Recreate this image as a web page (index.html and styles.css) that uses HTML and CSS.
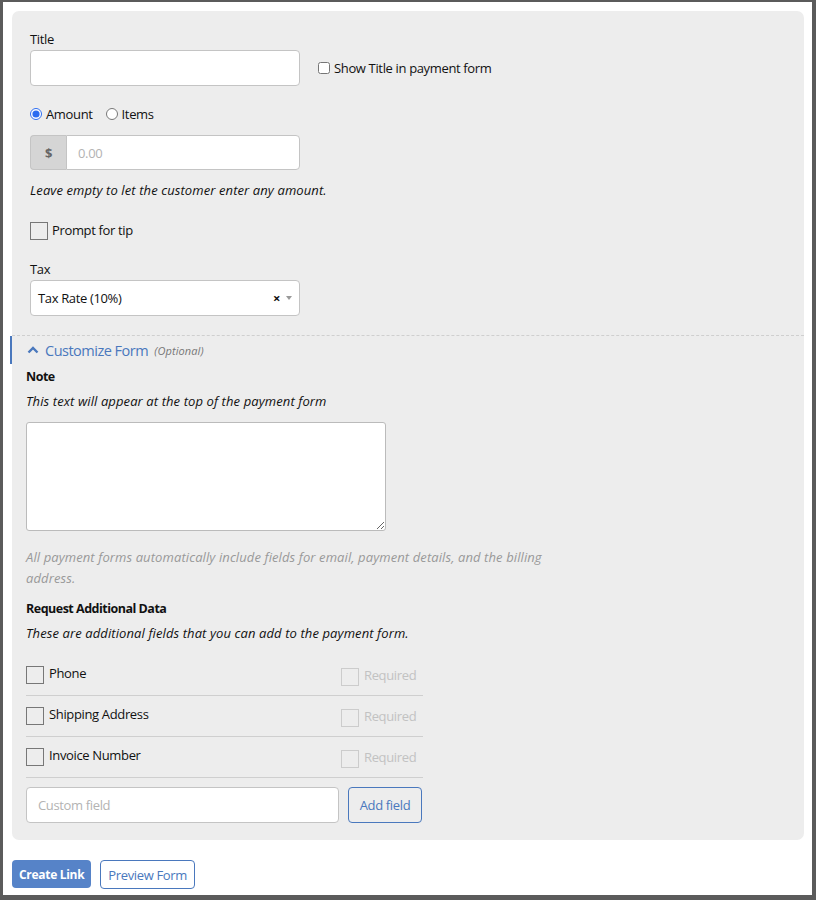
FILE: index.html
```html
<!DOCTYPE html>
<html lang="en">
<head>
    <meta charset="UTF-8">
    <title>Payment Link</title>
    <link rel="stylesheet" href="styles.css">
</head>
<body>
<div class="frame">
    <form class="panel">

        <div class="top">
            <label class="lbl">Title</label>
            <div class="row">
                <input type="text" class="field w270">
                <label class="inline"><input type="checkbox" class="small"> Show Title in payment form</label>
            </div>

            <div class="radios">
                <label><input type="radio" name="kind" checked> Amount</label>
                <label><input type="radio" name="kind"> Items</label>
            </div>

            <div class="group w270">
                <span class="addon">$</span>
                <input type="text" class="field" placeholder="0.00">
            </div>
            <p class="help">Leave empty to let the customer enter any amount.</p>

            <label class="tip"><span class="box"></span> Prompt for tip</label>

            <label class="lbl">Tax</label>
            <div class="select w270">
                <span>Tax Rate (10%)</span>
                <span class="clear">&times;</span>
                <span class="caret"></span>
            </div>
        </div>

        <!-- collapsible part -->
        <div class="custom">
            <div class="custom-head">
                <svg width="12" height="8" viewBox="0 0 12 8"><path d="M1.5 6.5 L6 2 L10.5 6.5" fill="none" stroke="#4a78bd" stroke-width="2.4"/></svg>
                <span class="custom-title">Customize Form</span>
                <em class="opt">(Optional)</em>
            </div>

            <div class="custom-body">
                <h4>Note</h4>
                <p class="help">This text will appear at the top of the payment form</p>
                <textarea class="note"></textarea>
                <p class="muted">All payment forms automatically include fields for email, payment details, and the billing address.</p>

                <h4>Request Additional Data</h4>
                <p class="help">These are additional fields that you can add to the payment form.</p>

                <div class="extra">
                    <div class="extra-row">
                        <span class="box"></span><span class="name">Phone</span>
                        <span class="req"><span class="box dim"></span>Required</span>
                    </div>
                    <div class="extra-row">
                        <span class="box"></span><span class="name">Shipping Address</span>
                        <span class="req"><span class="box dim"></span>Required</span>
                    </div>
                    <div class="extra-row">
                        <span class="box"></span><span class="name">Invoice Number</span>
                        <span class="req"><span class="box dim"></span>Required</span>
                    </div>
                    <div class="add-row">
                        <input type="text" class="field" placeholder="Custom field">
                        <button type="button" class="btn-line">Add field</button>
                    </div>
                </div>
            </div>
        </div>
    </form>

    <div class="actions">
        <button type="button" class="btn-main">Create Link</button>
        <button type="button" class="btn-line">Preview Form</button>
    </div>
</div>
</body>
</html>
```
FILE: styles.css
```css
html, body{
    margin: 0;
    padding: 0;
    background: #fff;
}

/*外框*/
.frame{
    box-sizing: border-box;
    width: 816px;
    height: 900px;
    border-style: solid;
    border-color: #5b5b5b;
    border-width: 2px 4px 5px 3px;
    padding: 9px 8px 0 9px;
    font-family: "Open Sans", "DejaVu Sans", sans-serif;
    font-size: 13px;
    letter-spacing: -0.35px;
    color: #111;
}

.panel{
    background: #ededed;
    border-radius: 7px;
    padding: 19px 0 16px 0;
    height: 829px;
    box-sizing: border-box;
}

.top{
    padding: 0 18px;
}

.lbl{
    display: block;
    line-height: 18px;
    margin-bottom: 2px;
}

.row{
    display: flex;
    align-items: center;
    gap: 18px;
}

.w270{ width: 270px; }

.field{
    box-sizing: border-box;
    height: 36px;
    border: 1px solid #c4c4c4;
    border-radius: 4px;
    background: #fff;
    padding: 0 11px;
    font: inherit;
    letter-spacing: inherit;
    outline: none;
}
.field::placeholder{ color: #b3b3b3; }

.inline{
    display: flex;
    align-items: center;
    gap: 4px;
    margin-top: -1px;
}
.small{
    margin: 0;
    width: 12px;
    height: 12px;
}

.radios{
    display: flex;
    gap: 13px;
    margin-top: 19px;
    line-height: 18px;
}
.radios label{
    display: flex;
    align-items: center;
    gap: 4px;
}
.radios input{
    margin: 0;
    width: 12px;
    height: 12px;
    accent-color: #2b6cf0;
}

.group{
    display: flex;
    margin-top: 12px;
}
.addon{
    width: 36px;
    height: 35px;
    box-sizing: border-box;
    background: #d5d5d5;
    border: 1px solid #c4c4c4;
    border-right: none;
    border-radius: 4px 0 0 4px;
    display: flex;
    align-items: center;
    justify-content: center;
    font-weight: bold;
    color: #666;
}
.group .field{
    flex: 1;
    height: 35px;
    border-radius: 0 4px 4px 0;
}

.help{
    margin: 12px 0 0 0;
    font-style: italic;
    letter-spacing: 0.1px;
    line-height: 16px;
}

.box{
    display: inline-block;
    box-sizing: border-box;
    width: 18px;
    height: 18px;
    border: 1px solid #777;
    background: #ededed;
    flex-shrink: 0;
}
.box.dim{
    border-color: #ccc;
}

.tip{
    display: flex;
    align-items: flex-start;
    gap: 4px;
    margin-top: 24px;
    line-height: 16px;
    height: 18px;
}
.tip + .lbl{
    margin-top: 20px;
}

.select{
    box-sizing: border-box;
    height: 36px;
    border: 1px solid #c4c4c4;
    border-radius: 4px;
    background: #fff;
    display: flex;
    align-items: center;
    padding: 0 7px;
}
.select span:first-child{ flex: 1; }
.clear{
    font-weight: bold;
    font-size: 13px;
    margin-right: 6px;
}
.caret{
    width: 0;
    height: 0;
    border-left: 3px solid transparent;
    border-right: 3px solid transparent;
    border-top: 4px solid #999;
}

/*自定义表单区域*/
.custom{
    margin-top: 19px;
    border-top: 1px dashed #cfcfcf;
}
.custom-head{
    display: flex;
    align-items: center;
    gap: 6px;
    height: 28px;
    margin-left: -2px;
    padding-left: 15px;
    border-left: 2px solid #4a78bd;
}
.custom-title{
    color: #4a78bd;
    font-size: 14.5px;
    letter-spacing: -0.5px;
}
.opt{
    color: #777;
    font-size: 11px;
    letter-spacing: 0.1px;
}

.custom-body{
    padding: 0 14px;
}
.custom-body h4{
    margin: 4px 0 0 0;
    font-size: 12.5px;
    letter-spacing: -0.5px;
    line-height: 18px;
}
.custom-body h4 + .help{
    margin-top: 7px;
}

.note{
    display: block;
    box-sizing: border-box;
    width: 360px;
    height: 109px;
    margin-top: 13px;
    border: 1px solid #bbb;
    border-radius: 3px;
    background: #fff;
}

.muted{
    width: 525px;
    margin: 16px 0 0 0;
    font-style: italic;
    letter-spacing: 0.1px;
    color: #999;
    line-height: 21px;
}
.muted + h4{
    margin-top: 11px;
}

.extra{
    width: 397px;
    margin-top: 14px;
}
.extra-row{
    display: flex;
    align-items: center;
    height: 40px;
    border-bottom: 1px solid #cfcfcf;
}
.extra-row .name{
    flex: 1;
    margin-left: 5px;
    margin-top: -4px;
}
.req{
    display: flex;
    align-items: center;
    gap: 5px;
    width: 82px;
    color: #c2c2c2;
}
.req span{ margin-top: 3px; }

.add-row{
    display: flex;
    gap: 9px;
    margin-top: 9px;
}
.add-row .field{
    width: 313px;
}

.btn-line{
    box-sizing: border-box;
    height: 36px;
    padding: 0 8px;
    border: 1px solid #4a78bd;
    border-radius: 4px;
    background: #fff;
    color: #4a78bd;
    font: inherit;
    letter-spacing: inherit;
    white-space: nowrap;
}
.add-row .btn-line{
    background: transparent;
    width: 74px;
}

.actions{
    display: flex;
    gap: 9px;
    margin-top: 20px;
}
.btn-main{
    height: 28px;
    padding: 0 7px;
    border: none;
    border-radius: 4px;
    background: #5683c8;
    color: #fff;
    font: inherit;
    font-size: 12px;
    font-weight: bold;
    letter-spacing: -0.3px;
}
.actions .btn-line{
    height: 29px;
    padding: 0 7px;
}
```
